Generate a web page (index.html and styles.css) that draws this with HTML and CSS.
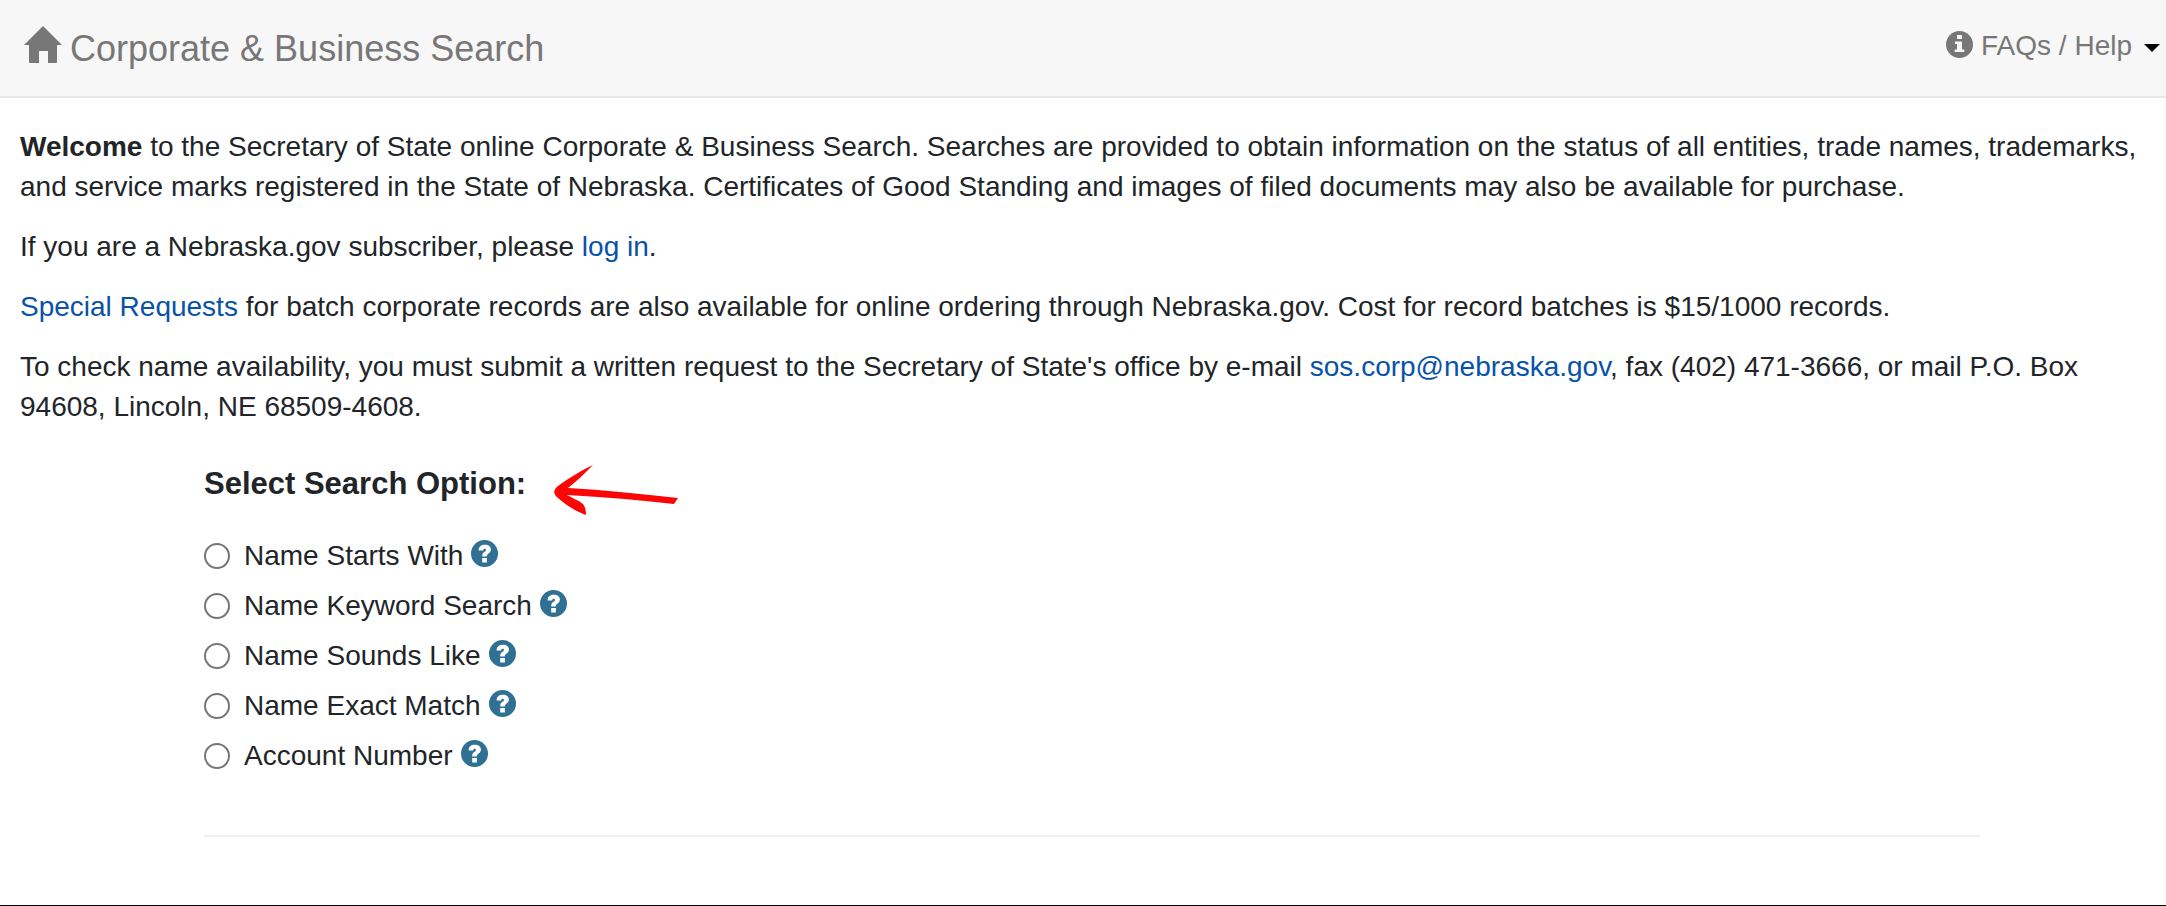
FILE: index.html
```html
<!DOCTYPE html>
<html lang="en">
<head>
    <meta charset="UTF-8">
    <meta name="viewport" content="width=device-width, initial-scale=1.0">
    <title>Corporate &amp; Business Search</title>
    <link rel="stylesheet" href="styles.css">
</head>
<body>
    <svg class="sprite" aria-hidden="true">
        <symbol id="icon-help" viewBox="0 0 27 27">
            <circle cx="13.5" cy="13.5" r="13.5" fill="#2f7093"/>
            <path d="M7.6 10.4 C7.8 6.6 10 4.8 13.7 4.8 C17.6 4.8 19.9 6.8 19.9 9.6 C19.9 12.2 18.2 13.3 16.8 14.2 C16 14.8 15.8 15.3 15.8 16.6 H11.2 C11.1 13.8 12 12.8 13.5 11.8 C14.5 11.1 14.9 10.7 14.9 9.9 C14.9 9.1 14.4 8.8 13.7 8.8 C12.7 8.8 12.3 9.4 12.2 10.4 Z M11.2 18 H15.9 V22.5 H11.2 Z" fill="#fff"/>
        </symbol>
    </svg>

    <header class="navbar">
        <a class="brand" href="#">
            <svg class="home-icon" viewBox="0 0 38 37" aria-hidden="true">
                <path d="M19 0 L38 19 H33 V36 Q33 37 32 37 H24 V25 H15 V37 H6 Q5 37 5 36 V19 H0 Z" fill="currentColor"/>
            </svg>
            <span>Corporate &amp; Business Search</span>
        </a>
        <button class="help-menu" type="button" aria-haspopup="true">
            <svg class="circle-icon" viewBox="0 0 27 27" aria-hidden="true">
                <circle cx="13.5" cy="13.5" r="13.5" fill="currentColor"/>
                <path d="M11 4 H16 V8 H11 Z M9 10.5 H16 V18.5 H18.3 V21 H8.7 V18.5 H11 V13 H9 Z" fill="#f7f7f7"/>
            </svg>
            <span>FAQs / Help</span>
            <span class="caret"></span>
        </button>
    </header>

    <main class="container">
        <p><strong>Welcome</strong> to the Secretary of State online Corporate &amp; Business Search. Searches are provided to obtain information on the status of all entities, trade names, trademarks, and service marks registered in the State of Nebraska. Certificates of Good Standing and images of filed documents may also be available for purchase.</p>
        <p>If you are a Nebraska.gov subscriber, please <a href="#">log in</a>.</p>
        <p><a href="#">Special Requests</a> for batch corporate records are also available for online ordering through Nebraska.gov. Cost for record batches is $15/1000 records.</p>
        <p>To check name availability, you must submit a written request to the Secretary of State's office by e-mail <a href="mailto:sos.corp@nebraska.gov">sos.corp@nebraska.gov</a>, fax (402) 471-3666, or mail P.O. Box 94608, Lincoln, NE 68509-4608.</p>

        <form class="search-form">
            <div class="form-heading">
                <h2 id="searchOption">Select Search Option:</h2>
                <svg class="arrow" viewBox="0 0 126 54" aria-hidden="true">
                    <path d="M39 1 C28 6 15 14 4 22 C-1 26 -1 30 4 34 C12 41 21 47 32 51 C32 46 31 43 29 40 C24 36 18 34 13 31 C50 33 86 36 120 40 L124 34 C86 30 50 26 14 24 C23 17 31 9 39 1 Z" fill="#fb0505"/>
                </svg>
            </div>

            <div class="options" role="radiogroup" aria-labelledby="searchOption">
                <div class="option">
                    <input type="radio" name="searchType" id="startsWith">
                    <label for="startsWith">Name Starts With</label>
                    <a class="help" href="#" aria-label="Help"><svg class="circle-icon"><use href="#icon-help"/></svg></a>
                </div>
                <div class="option">
                    <input type="radio" name="searchType" id="keyword">
                    <label for="keyword">Name Keyword Search</label>
                    <a class="help" href="#" aria-label="Help"><svg class="circle-icon"><use href="#icon-help"/></svg></a>
                </div>
                <div class="option">
                    <input type="radio" name="searchType" id="soundsLike">
                    <label for="soundsLike">Name Sounds Like</label>
                    <a class="help" href="#" aria-label="Help"><svg class="circle-icon"><use href="#icon-help"/></svg></a>
                </div>
                <div class="option">
                    <input type="radio" name="searchType" id="exactMatch">
                    <label for="exactMatch">Name Exact Match</label>
                    <a class="help" href="#" aria-label="Help"><svg class="circle-icon"><use href="#icon-help"/></svg></a>
                </div>
                <div class="option">
                    <input type="radio" name="searchType" id="accountNumber">
                    <label for="accountNumber">Account Number</label>
                    <a class="help" href="#" aria-label="Help"><svg class="circle-icon"><use href="#icon-help"/></svg></a>
                </div>
            </div>
            <hr>
        </form>
    </main>
</body>
</html>
```
FILE: styles.css
```css
* {
    box-sizing: border-box;
}

body {
    display: flex;
    flex-direction: column;
    min-height: 100vh;
    margin: 0;
    border-bottom: 1px solid #000;
    background-color: #fff;
    color: #212529;
    font-family: "Helvetica Neue", "Liberation Sans", Arial, sans-serif;
    font-size: 28px;
    line-height: 40px;
}

a {
    color: #0852a8;
    text-decoration: none;
}

.sprite {
    display: none;
}

.navbar {
    display: flex;
    justify-content: space-between;
    align-items: flex-start;
    padding: 26px 6px 20px 24px;
    border-bottom: 2px solid #e7e7e7;
    background-color: #f7f7f7;
}

.brand {
    display: flex;
    gap: 8px;
    color: #777;
    font-size: 36px;
    line-height: 46px;
    padding-bottom: 4px;
}

.home-icon {
    width: 38px;
    height: 37px;
}

.help-menu {
    display: flex;
    align-items: center;
    gap: 8px;
    padding: 0;
    border: 0;
    background: none;
    color: #777;
    font: inherit;
}

.circle-icon {
    display: block;
    width: 27px;
    height: 27px;
}

.help-menu .circle-icon {
    margin-bottom: 4px;
}

.caret {
    margin: 4px 0 0 4px;
    border-top: 8px solid #000;
    border-left: 8px solid transparent;
    border-right: 8px solid transparent;
}

.container {
    padding: 29px 14px 0 20px;
}

p {
    margin: 0 0 20px;
}

.search-form {
    margin: 37px 172px 0 184px;
}

.form-heading {
    display: flex;
    align-items: flex-start;
    gap: 28px;
}

h2 {
    margin: 0;
    font-size: 31px;
    line-height: 40px;
}

.arrow {
    width: 126px;
    height: 54px;
}

.options {
    margin-top: 13px;
}

.option {
    display: flex;
    align-items: center;
    height: 50px;
}

.option input {
    appearance: none;
    width: 26px;
    height: 26px;
    margin: 0 14px 0 0;
    border: 2px solid #767676;
    border-radius: 50%;
    background-color: #fff;
}

.option input:checked {
    border-width: 8px;
}

.help {
    margin: 0 0 6px 8px;
}

hr {
    margin: 54px 0 0;
    border: 0;
    border-top: 2px solid #eee;
}
```
